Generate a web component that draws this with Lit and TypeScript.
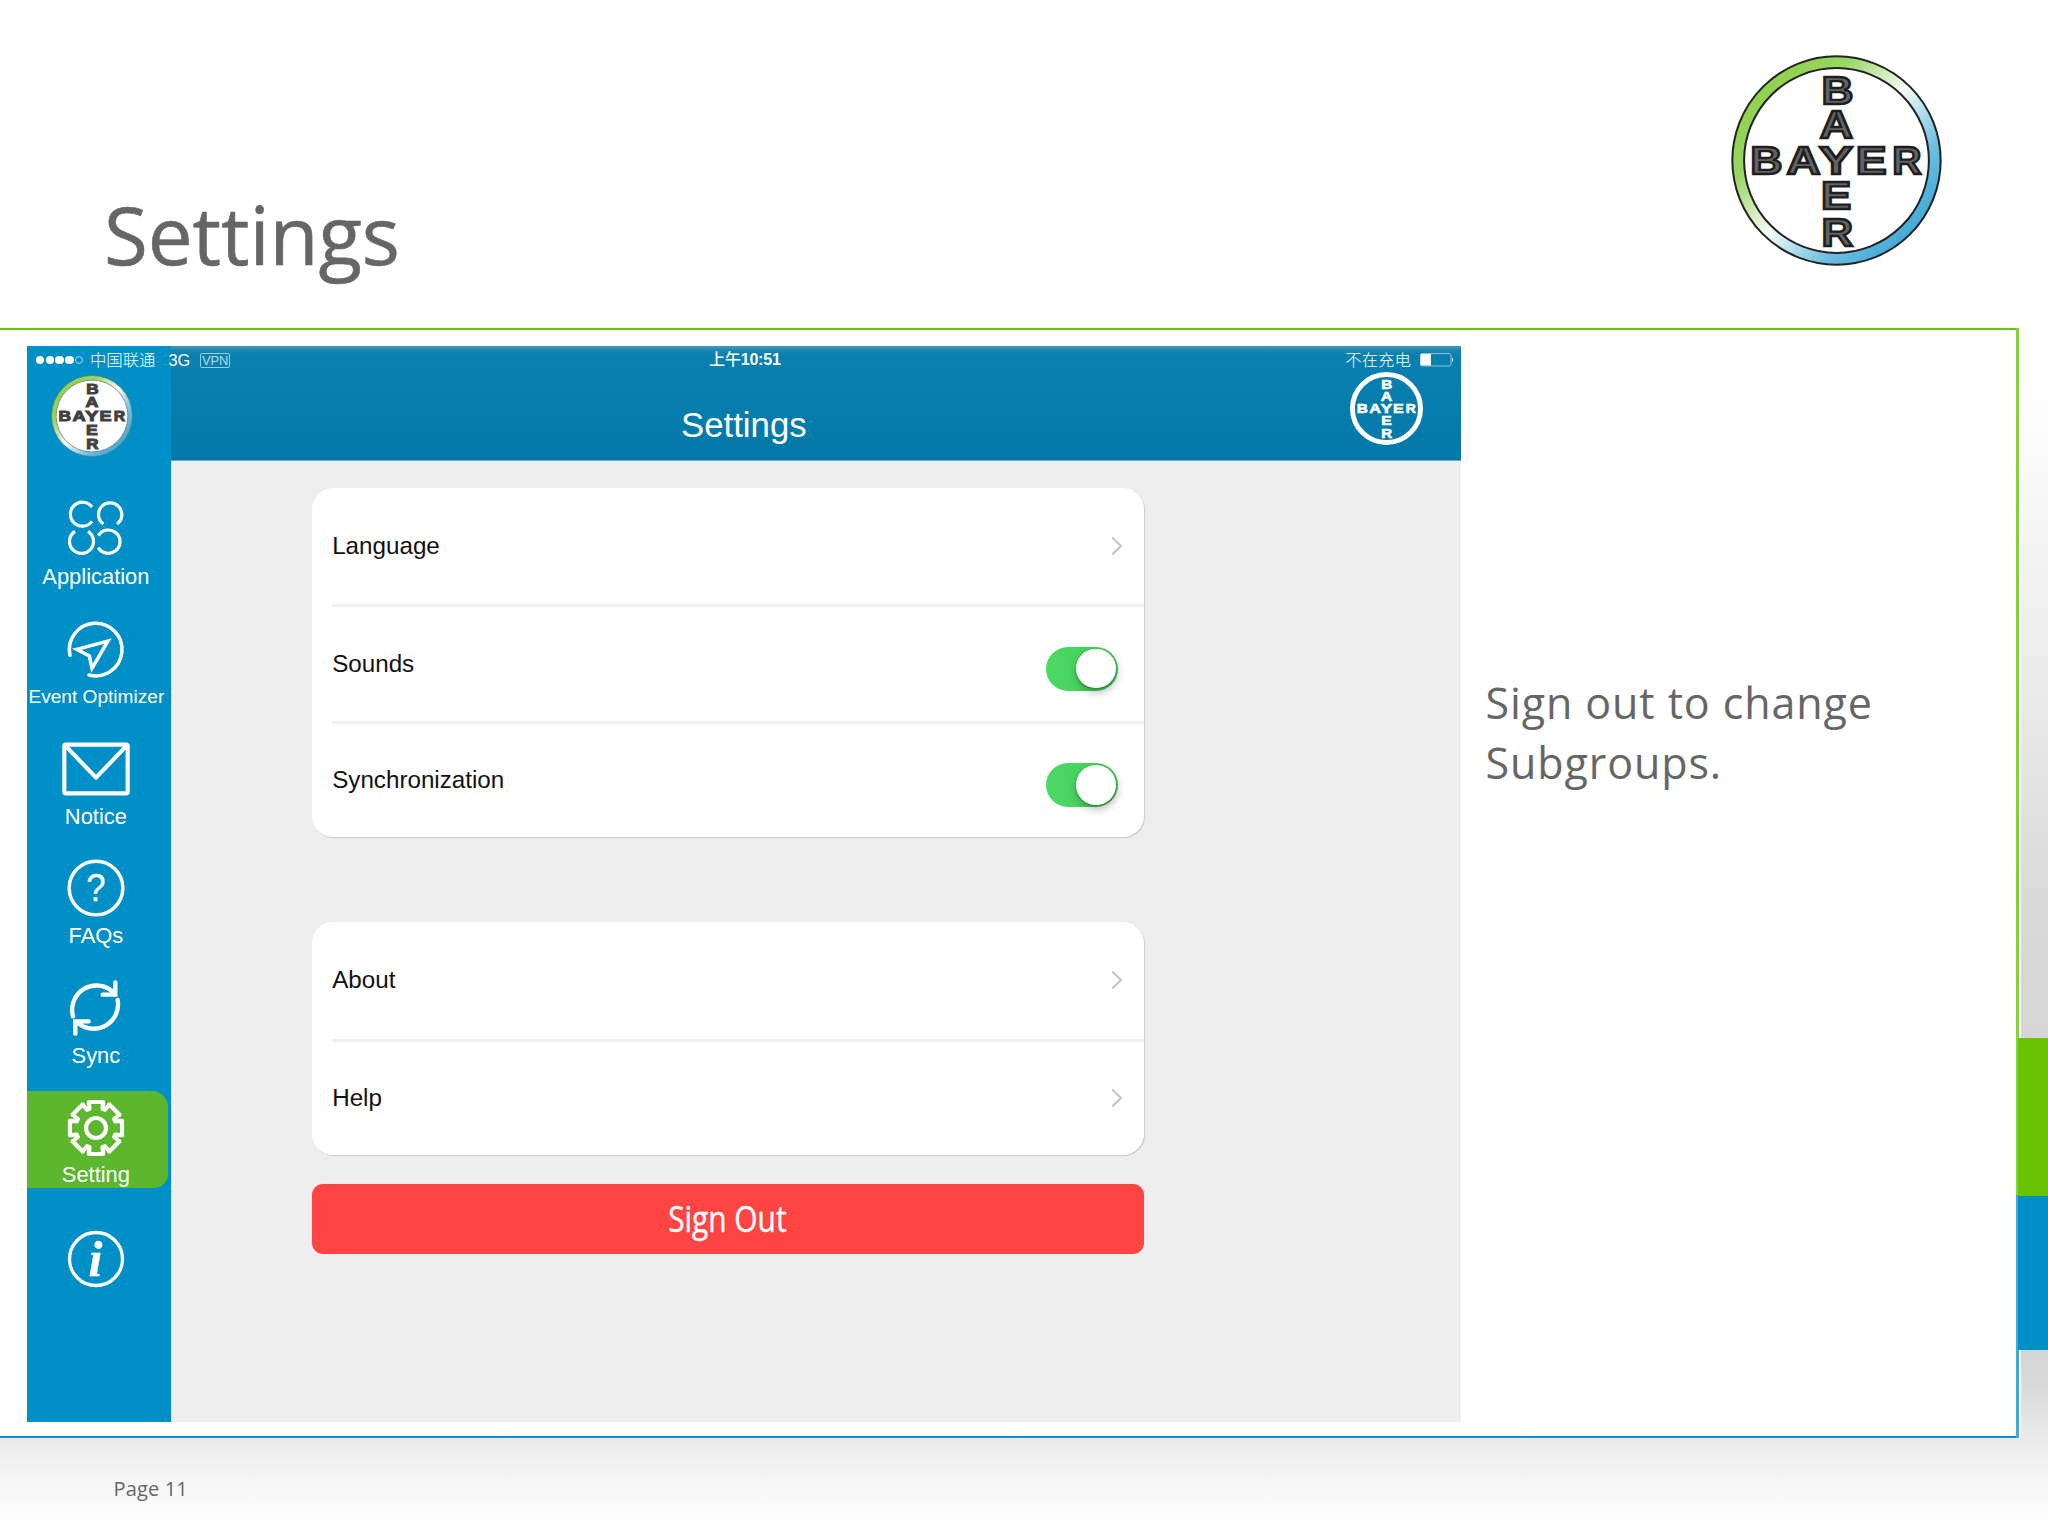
import { LitElement, html, svg, css } from "lit";
import { customElement, property } from "lit/decorators.js";
import { classMap } from "lit/directives/class-map.js";

@customElement("bayer-cross")
class BayerCross extends LitElement {
  @property() variant = "large";

  static styles = css`
    :host { display: block; }
    svg { display: block; width: 100%; height: 100%; overflow: visible; }
    text { font-family: "Liberation Sans", Arial, sans-serif; font-weight: 700; font-size: 115px; }
    .large text { fill: #636363; stroke: #1f1f1f; stroke-width: 7; }
    .small text { fill: #414141; stroke: #414141; stroke-width: 8; }
    .white text { fill: #fff; stroke: #fff; stroke-width: 5; }
  `;

  private letter(ch: string, x: number, width: number, baseline: number) {
    return svg`<text x=${x} y=${baseline} textLength=${width} lengthAdjust="spacingAndGlyphs">${ch}</text>`;
  }

  render() {
    const white = this.variant === "white";
    const small = this.variant === "small";
    return html`
      <svg class=${this.variant} viewBox="-314 -314 628 628">
        <defs>
          <linearGradient id="ring" x1="0.12" y1="0.14" x2="0.88" y2="0.86">
            <stop offset="0" stop-color="#8fd14a"></stop>
            <stop offset="0.22" stop-color="#98d662"></stop>
            <stop offset="0.5" stop-color="#f6fbf8"></stop>
            <stop offset="0.78" stop-color="#6bbfe0"></stop>
            <stop offset="1" stop-color="#3fa7d6"></stop>
          </linearGradient>
        </defs>
        ${white
          ? svg`<circle r="293" fill="none" stroke="#fff" stroke-width="42"></circle>`
          : svg`
            <circle r="310" fill="url(#ring)" stroke=${small ? "#4f7f86" : "#222"} stroke-width="6"></circle>
            <circle r="275" fill="#fff" stroke=${small ? "#777" : "#222"} stroke-width="6"></circle>`}
        ${this.letter("B", -257, 96, 40)}
        ${this.letter("A", -149, 101, 40)}
        ${this.letter("Y", -52, 101, 40)}
        ${this.letter("E", 57, 92, 40)}
        ${this.letter("R", 166, 87, 40)}
        ${this.letter("B", -45, 95, -169)}
        ${this.letter("A", -50, 99, -67)}
        ${this.letter("E", -46, 90, 145)}
        ${this.letter("R", -45, 94, 253)}
      </svg>
    `;
  }
}

const gearPath = (() => {
  const pts: string[] = [];
  const at = (deg: number, r: number) => {
    const a = (deg * Math.PI) / 180;
    pts.push(`${(Math.sin(a) * r).toFixed(1)},${(-Math.cos(a) * r).toFixed(1)}`);
  };
  for (let i = 0; i < 8; i++) {
    at(i * 45 - 15.5, 81);
    at(i * 45 + 15.5, 81);
    at(i * 45 + 18.5, 61);
    at(i * 45 + 26.5, 61);
  }
  return `M${pts.join("L")}Z`;
})();

const icons: Record<string, unknown> = {
  application: svg`
    <g stroke-width="9.5" stroke-linecap="butt">
      <path d="M-12-66A36 36 0 1 0-12-23"></path>
      <path d="M22-15A35 35 0 1 1 63-15"></path>
      <path d="M-63 7A36 36 0 1 0-24 7"></path>
      <path d="M7 20A35 35 0 1 1 7 56"></path>
    </g>`,
  event: svg`
    <g stroke-width="10.5">
      <path d="M-78 19A79 79 0 1 1-21 78"></path>
      <path d="M-58 1L36-24L-12 58L-20 21Z" stroke-linejoin="miter"></path>
    </g>`,
  notice: svg`
    <g stroke-width="12.5">
      <rect x="-95" y="-73" width="190" height="146" rx="5"></rect>
      <path d="M-90-68L0 26L90-68"></path>
    </g>`,
  faqs: svg`
    <circle r="80.5" stroke-width="10.5"></circle>
    <text class="glyph sans" x="-29" y="40" textLength="58" lengthAdjust="spacingAndGlyphs">?</text>`,
  sync: svg`
    <g stroke-width="13" stroke-linejoin="miter">
      <path d="M-69 25A73 73 0 0 1 52-47"></path>
      <path d="M58-77V-40H20"></path>
      <path d="M65-24A73 73 0 0 1-55 44"></path>
      <path d="M-22 40H-62V77"></path>
    </g>`,
  setting: svg`
    <path d=${gearPath} transform="translate(0 3)" stroke-width="12.5"></path>
    <circle cy="3" r="30" stroke-width="12.5"></circle>`,
  info: svg`
    <circle r="79.5" stroke-width="10"></circle>
    <text class="glyph serif" x="-2" y="50" text-anchor="middle">i</text>`,
};

@customElement("app-root")
class AppRoot extends LitElement {
  private nav = [
    { icon: "application", label: "Application" },
    { icon: "event", label: "Event Optimizer", compact: true },
    { icon: "notice", label: "Notice" },
    { icon: "faqs", label: "FAQs" },
    { icon: "sync", label: "Sync" },
    { icon: "setting", label: "Setting", active: true },
    { icon: "info", label: "" },
  ];

  private groups = [
    [
      { label: "Language", kind: "link" },
      { label: "Sounds", kind: "toggle" },
      { label: "Synchronization", kind: "toggle" },
    ],
    [
      { label: "About", kind: "link" },
      { label: "Help", kind: "link" },
    ],
  ];

  static styles = css`
    :host {
      display: block;
      width: 2048px;
      height: 1536px;
      overflow: hidden;
      background: #fff;
      color: #666;
      font-family: "Open Sans", "Noto Sans", sans-serif;
    }
    * { box-sizing: border-box; }
    .slide { display: flex; flex-direction: column; height: 1536px; }
    .top {
      display: flex;
      justify-content: space-between;
      align-items: flex-start;
      height: 328px;
      padding: 55px 106px 0 104px;
    }
    .top h1 { margin: 129px 0 0; font-weight: 400; font-size: 80px; line-height: 100px; letter-spacing: -0.1px; -webkit-text-stroke: 0.6px #666; }
    .top bayer-cross { width: 211px; height: 211px; }
    .body { display: flex; height: 1109.5px; }
    .content {
      display: flex;
      width: 2016px;
      padding: 15.5px 0 0 27.4px;
      border-top: 2px solid #6cc204;
      border-bottom: 2px solid #0e92c8;
    }
    .edge { width: 3px; height: 1109.5px; background: linear-gradient(#86d03a 867px, #3fa9d8 867px); }
    .rail { display: flex; flex-direction: column; flex: 1; }
    .rail .shade { height: 710px; margin-left: 2px; background: linear-gradient(#fff, #fdfdfd 12%, #ebebeb 50%, #d8d8d8 84%, #d6d6d6); }
    .rail .green { height: 157.5px; margin-left: -1px; background: #6bc200; }
    .rail .blue { height: 154px; margin-left: -1px; background: #0090c8; }
    .rail .under { flex: 1; margin-left: 2px; background: linear-gradient(#d4d4d4, #dadada 40%, #eaeaea); }
    .foot {
      flex: 1;
      padding: 36px 0 0 113.5px;
      font-size: 20px;
      line-height: 30px;
      letter-spacing: 0.15px;
      background: linear-gradient(#eaeaea, #f6f6f6 45%, #fff 88%);
    }
    .note { margin: 327px 0 0 24.1px; width: 440px; font-size: 43px; line-height: 60px; letter-spacing: 0.9px; }

    .app {
      position: relative;
      display: flex;
      width: 1434px;
      height: 1076px;
      background: #eee;
      color: #fff;
      font-family: "Liberation Sans", Arial, "Noto Sans CJK SC", sans-serif;
    }
    .sidebar { width: 143.4px; background: #0090c7; box-shadow: 1px 0 #bfe2f1; display: flex; flex-direction: column; }
    .brand { height: 149px; padding: 29px 0 0 23.8px; }
    .brand bayer-cross { width: 82px; height: 82px; }
    .items { display: flex; flex-direction: column; gap: 23.2px; }
    .item { display: flex; flex-direction: column; align-items: center; height: 96.2px; width: 141px; padding-right: 4px; }
    .item:first-child { position: relative; top: -1px; }
    .item.active { background: #5cb72e; border-radius: 0 16px 14px 0; }
    .item svg { width: 70px; height: 70px; margin: 0.5px 0 1px; flex: none; fill: none; stroke: #fff; stroke-linecap: round; stroke-linejoin: round; overflow: visible; }
    .item .label { font-size: 21.9px; line-height: 26px; height: 26px; white-space: nowrap; margin-top: -1px; }
    .item.compact .label { font-size: 19.1px; margin-left: 1px; }
    .item.info svg { margin: 13px 0 0 1px; }
    .glyph { fill: #fff; }
    .sans { font: 400 116px "Liberation Sans", Arial, sans-serif; stroke-width: 1; }
    .serif { font: italic 700 150px "Liberation Serif", serif; stroke-width: 1; }

    .main { flex: 1; display: flex; flex-direction: column; }
    .bar {
      display: flex;
      justify-content: center;
      height: 115px;
      padding-top: 59px;
      background: linear-gradient(#4498bc, #1683b0 5px, #0880b0 10px, #0479a9);
      border-bottom: 1px solid #5faecb;
    }
    .bar .title { font-size: 34.8px; line-height: 40px; margin-right: 144.5px; }
    .bar-logo { position: absolute; right: 38px; top: 26.8px; width: 73px; height: 73px; }
    .status {
      position: absolute;
      inset: 0 0 auto 0;
      height: 29px;
      padding: 0 6.5px 0 8.5px;
      display: grid;
      grid-template-columns: 1fr auto 1fr;
      align-items: center;
      font-size: 16.4px;
      line-height: 24px;
    }
    .left, .right { display: flex; align-items: center; }
    .right { justify-content: flex-end; gap: 9.5px; }
    .dots { display: flex; gap: 1.4px; margin-right: 6.5px; }
    .dots i { width: 8.4px; height: 8.4px; border-radius: 50%; background: #fff; }
    .dots i.off { background: none; border: 1px solid #a9d8ec; }
    .cjk { font-weight: 300; }
    .net { margin-left: 13px; }
    .vpn { margin-left: 10px; width: 29.5px; height: 15px; border: 1px solid #9ccbe0; border-radius: 2px; font-size: 12.8px; line-height: 14px; text-align: center; color: #b5d9e8; }
    .time { font-weight: 700; font-size: 16px; letter-spacing: -0.2px; margin-right: 1px; }
    .time span { font-weight: 500; }
    .battery { width: 34.5px; height: 14px; fill: none; }

    .settings { display: flex; flex-direction: column; width: 832.5px; margin: 27.3px 0 0 140.9px; color: #111; }
    .group { background: #fff; border-radius: 21px; box-shadow: 1px 1px 1px #cacaca; margin-bottom: 85.2px; }
    .group + .group { margin-bottom: 28.6px; }
    .row {
      display: flex;
      justify-content: space-between;
      align-items: center;
      height: 116.4px;
      margin-left: 20.5px;
      padding-right: 21px;
      font-size: 24.2px;
      line-height: 30px;
    }
    .row + .row { border-top: 3px solid #f1f1f1; }
    .row svg { width: 12px; height: 20px; fill: none; stroke: #c5c5ca; stroke-width: 2.2; }
    .toggle { width: 72.5px; height: 44px; border-radius: 22px; background: linear-gradient(90deg, #4cd964, #43cc5a); padding: 2px 2.5px; display: flex; justify-content: flex-end; margin: 10px 5px 0 0; }
    .toggle i { width: 39.6px; height: 39.6px; border-radius: 50%; background: #fff; box-shadow: 1px 4px 8px rgba(0, 0, 0, 0.28), 0 1px 2px rgba(0, 0, 0, 0.2); }
    .signout { display: flex; justify-content: center; height: 70px; border-radius: 11px; background: #ff4444; color: #fff; font: 400 36px/69px "Open Sans", sans-serif; }
    .signout span { transform: scaleX(0.83); margin-right: 2px; -webkit-text-stroke: 0.4px #fff; }
  `;

  private control(kind: string) {
    return kind === "toggle"
      ? html`<div class="toggle"><i></i></div>`
      : html`<svg viewBox="0 0 12 20"><path d="M1.2 1.5L10 10L1.2 18.5"></path></svg>`;
  }

  render() {
    return html`
      <div class="slide">
        <header class="top">
          <h1>Settings</h1>
          <bayer-cross variant="large"></bayer-cross>
        </header>
        <div class="body">
          <div class="content">
            <section class="app">
              <nav class="sidebar">
                <div class="brand"><bayer-cross variant="small"></bayer-cross></div>
                <div class="items">
                  ${this.nav.map(
                    (n) => html`
                      <div class=${classMap({ item: true, active: !!n.active, compact: !!n.compact, info: n.icon === "info" })}>
                        <svg viewBox="-105 -105 210 210">${icons[n.icon]}</svg>
                        <span class="label">${n.label}</span>
                      </div>
                    `
                  )}
                </div>
              </nav>
              <div class="main">
                <div class="bar"><span class="title">Settings</span></div>
                <div class="settings">
                  ${this.groups.map(
                    (rows) => html`
                      <div class="group">
                        ${rows.map((r) => html`<div class="row"><span>${r.label}</span>${this.control(r.kind)}</div>`)}
                      </div>
                    `
                  )}
                  <div class="signout"><span>Sign Out</span></div>
                </div>
              </div>
              <div class="status">
                <div class="left">
                  <span class="dots"><i></i><i></i><i></i><i></i><i class="off"></i></span>
                  <span class="cjk">中国联通</span>
                  <span class="net">3G</span>
                  <span class="vpn">VPN</span>
                </div>
                <div class="time"><span>上午</span>10:51</div>
                <div class="right">
                  <span class="cjk">不在充电</span>
                  <svg class="battery" viewBox="0 0 34.5 14">
                    <rect x="0.5" y="0.5" width="30.5" height="12.5" rx="2" stroke="#8fc3da"></rect>
                    <rect x="0.5" y="1" width="10.5" height="11.5" fill="#fff"></rect>
                    <path d="M32 4.5q2.4 2.3 0 4.6z" fill="#fff"></path>
                  </svg>
                </div>
              </div>
              <bayer-cross class="bar-logo" variant="white"></bayer-cross>
            </section>
            <p class="note">Sign out to change<br />Subgroups.</p>
          </div>
          <div class="edge"></div>
          <div class="rail">
            <div class="shade"></div>
            <div class="green"></div>
            <div class="blue"></div>
            <div class="under"></div>
          </div>
        </div>
        <footer class="foot">Page 11</footer>
      </div>
    `;
  }
}
